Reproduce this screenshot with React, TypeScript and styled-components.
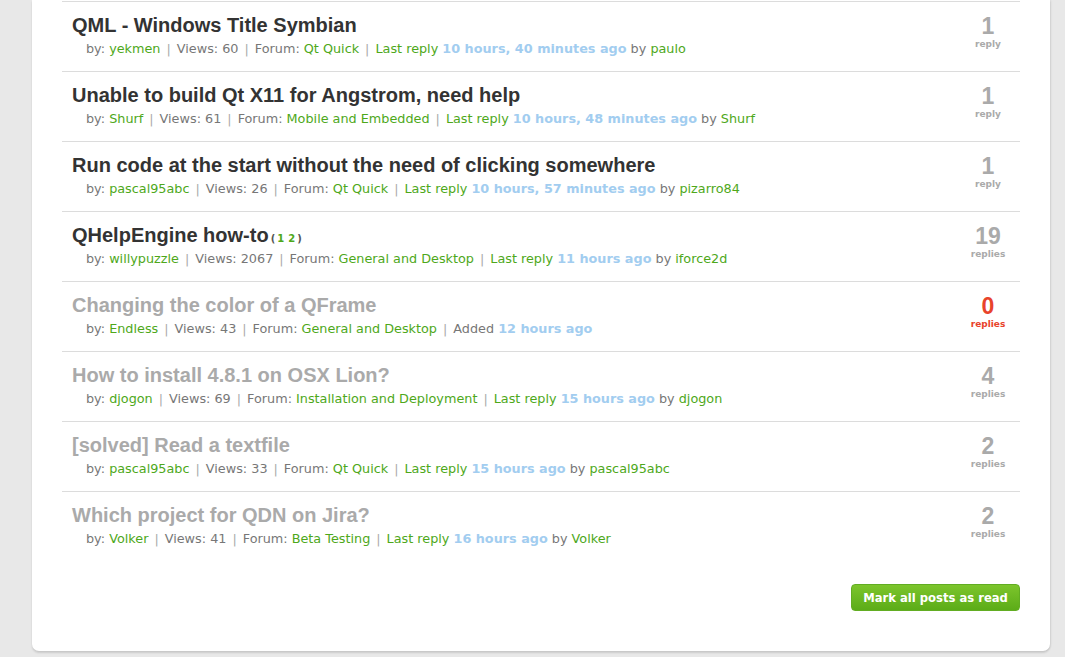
import React from "react";
import styled, { createGlobalStyle } from "styled-components";

const GlobalStyle = createGlobalStyle`
  html, body {
    margin: 0;
    padding: 0;
    background: #e8e8e8;
  }
`;

const Page = styled.div`
  padding: 0 15px 6px 32px;
  height: 657px;
  box-sizing: border-box;
  overflow: hidden;
`;

const Card = styled.div`
  width: 1018px;
  background: #ffffff;
  border-radius: 0 0 7px 7px;
  box-shadow: 0 2px 2px rgba(0, 0, 0, 0.12), 1px 0 2px rgba(0, 0, 0, 0.08);
  padding: 1px 30px 40px 30px;
  box-sizing: border-box;
`;

const List = styled.div`
  display: flex;
  flex-direction: column;
`;

const Row = styled.div`
  display: flex;
  height: 70px;
  box-sizing: border-box;
  border-top: 1px solid #dcdcdc;
`;

const Main = styled.div`
  flex: 1;
  padding: 10px 0 0 10px;
`;

const Title = styled.div<{ $read: boolean }>`
  font-family: "Liberation Sans", Arial, sans-serif;
  font-weight: bold;
  font-size: 20px;
  line-height: 26px;
  height: 26px;
  color: ${(p) => (p.$read ? "#aaaaaa" : "#333333")};
`;

const Pages = styled.span`
  font-family: "DejaVu Sans", Verdana, sans-serif;
  font-size: 10px;
  line-height: 1;
  font-weight: bold;
  color: #555;
  margin-left: 2px;

  b {
    color: #4ea81a;
    margin: 0 2px;
  }
`;

const Meta = styled.div`
  font-family: "DejaVu Sans", Verdana, sans-serif;
  font-size: 12.8px;
  line-height: 22px;
  color: #777777;
  padding-left: 14px;
`;

const Link = styled.span`
  color: #4ea81a;
`;

const Sep = styled.span`
  color: #aaaaaa;
  margin: 0 6px;
`;

const When = styled.span`
  color: #a2cdf0;
  font-weight: bold;
`;

const Count = styled.div<{ $zero: boolean }>`
  width: 64px;
  display: flex;
  flex-direction: column;
  align-items: center;
  padding-top: 11px;
  color: ${(p) => (p.$zero ? "#e8432b" : "#aaaaaa")};
`;

const Num = styled.div`
  font-family: "Liberation Sans", Arial, sans-serif;
  font-weight: bold;
  font-size: 23px;
  line-height: 26px;
`;

const Label = styled.div`
  font-family: "DejaVu Sans", Verdana, sans-serif;
  font-weight: bold;
  font-size: 9px;
  line-height: 11px;
`;

const Footer = styled.div`
  display: flex;
  justify-content: flex-end;
  padding-top: 23px;
`;

const Button = styled.button`
  height: 27px;
  width: 169px;
  border: 1px solid #62ad22;
  border-radius: 4px;
  background: linear-gradient(#7cc52c, #5cac18);
  color: #ffffff;
  font-family: "DejaVu Sans", Verdana, sans-serif;
  font-weight: bold;
  font-size: 11.6px;
  padding: 0;
  cursor: pointer;
`;

type Topic = {
  title: string;
  read: boolean;
  pages?: number[];
  by: string;
  views: number;
  forum: string;
  added?: boolean;
  when: string;
  last?: string;
  replies: number;
};

const topics: Topic[] = [
  { title: "QML - Windows Title Symbian", read: false, by: "yekmen", views: 60, forum: "Qt Quick", when: "10 hours, 40 minutes ago", last: "paulo", replies: 1 },
  { title: "Unable to build Qt X11 for Angstrom, need help", read: false, by: "Shurf", views: 61, forum: "Mobile and Embedded", when: "10 hours, 48 minutes ago", last: "Shurf", replies: 1 },
  { title: "Run code at the start without the need of clicking somewhere", read: false, by: "pascal95abc", views: 26, forum: "Qt Quick", when: "10 hours, 57 minutes ago", last: "pizarro84", replies: 1 },
  { title: "QHelpEngine how-to", read: false, pages: [1, 2], by: "willypuzzle", views: 2067, forum: "General and Desktop", when: "11 hours ago", last: "iforce2d", replies: 19 },
  { title: "Changing the color of a QFrame", read: true, by: "Endless", views: 43, forum: "General and Desktop", added: true, when: "12 hours ago", replies: 0 },
  { title: "How to install 4.8.1 on OSX Lion?", read: true, by: "djogon", views: 69, forum: "Installation and Deployment", when: "15 hours ago", last: "djogon", replies: 4 },
  { title: "[solved] Read a textfile", read: true, by: "pascal95abc", views: 33, forum: "Qt Quick", when: "15 hours ago", last: "pascal95abc", replies: 2 },
  { title: "Which project for QDN on Jira?", read: true, by: "Volker", views: 41, forum: "Beta Testing", when: "16 hours ago", last: "Volker", replies: 2 },
];

const TopicRow: React.FC<{ t: Topic }> = ({ t }) => (
  <Row>
    <Main>
      <Title $read={t.read}>
        {t.title}
        {t.pages && (
          <Pages>
            (
            {t.pages.map((p) => (
              <b key={p}>{p}</b>
            ))}
            )
          </Pages>
        )}
      </Title>
      <Meta>
        by: <Link>{t.by}</Link>
        <Sep>|</Sep>Views: {t.views}
        <Sep>|</Sep>Forum: <Link>{t.forum}</Link>
        <Sep>|</Sep>
        {t.added ? (
          <>Added <When>{t.when}</When></>
        ) : (
          <>
            <Link>Last reply</Link> <When>{t.when}</When> by <Link>{t.last}</Link>
          </>
        )}
      </Meta>
    </Main>
    <Count $zero={t.replies === 0}>
      <Num>{t.replies}</Num>
      <Label>{t.replies === 1 ? "reply" : "replies"}</Label>
    </Count>
  </Row>
);

export default function App() {
  return (
    <>
      <GlobalStyle />
      <Page>
        <Card>
          <List>
            {topics.map((t) => (
              <TopicRow key={t.title} t={t} />
            ))}
          </List>
          <Footer>
            <Button>Mark all posts as read</Button>
          </Footer>
        </Card>
      </Page>
    </>
  );
}
